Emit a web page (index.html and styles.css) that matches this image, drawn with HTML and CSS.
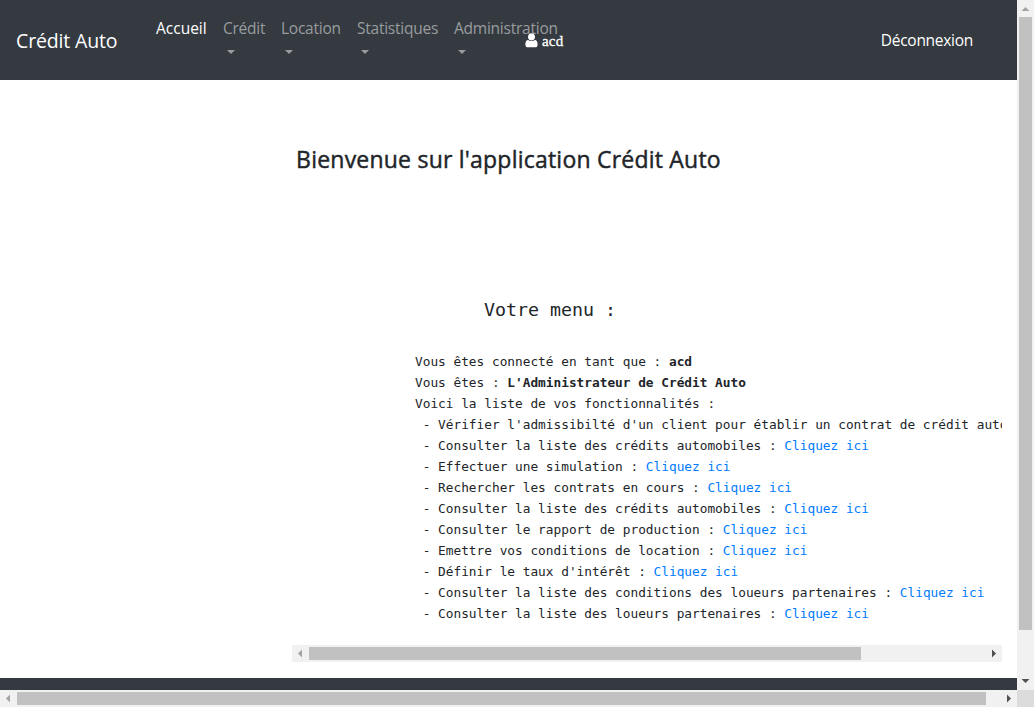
FILE: index.html
```html
<!DOCTYPE html>
<html lang="fr">
<head>
<meta charset="utf-8">
<title>Crédit Auto</title>
<link rel="stylesheet" href="styles.css">
</head>
<body>
<div class="window">
  <div class="page">
    <header class="navbar">
      <a class="brand">Crédit Auto</a>
      <nav class="links">
        <a class="link active home">Accueil</a>
        <a class="link credit">Crédit<i class="caret"></i></a>
        <a class="link location">Location<i class="caret"></i></a>
        <a class="link stats">Statistiques<i class="caret"></i></a>
        <a class="link admin">Administration<i class="caret"></i></a>
      </nav>
      <span class="user">
        <svg class="user-icon" width="13" height="15" viewBox="0 0 13 15"><path fill="#fff" d="M6.5 0.3C8.6 0.3 10 1.8 10 3.9S8.6 7.5 6.5 7.5 3 6 3 3.900 4.400 .3 6.500 .3ZM3.300 6.900C4.200 7.700 5.300 8.100 6.500 8.100S8.800 7.700 9.700 6.900C12 6.900 12.600 9.200 12.600 11.700 12.600 13.300 11.700 14.300 10.200 14.300H2.800C1.300 14.300 .4 13.300 .4 11.700 .4 9.200 1 6.900 3.300 6.900Z"/></svg>
        <span>acd</span>
      </span>
      <a class="logout">Déconnexion</a>
    </header>
    <main class="content">
      <h1 class="title">Bienvenue sur l'application Crédit Auto</h1>
      <section class="panel">
        <h2 class="menu-title">Votre menu :</h2>
<pre class="menu">Vous êtes connecté en tant que : <b>acd</b>
Vous êtes : <b>L'Administrateur de Crédit Auto</b>
Voici la liste de vos fonctionnalités :
 - Vérifier l'admissibilté d'un client pour établir un contrat de crédit automobile : <a>Cliquez ici</a>
 - Consulter la liste des crédits automobiles : <a>Cliquez ici</a>
 - Effectuer une simulation : <a>Cliquez ici</a>
 - Rechercher les contrats en cours : <a>Cliquez ici</a>
 - Consulter la liste des crédits automobiles : <a>Cliquez ici</a>
 - Consulter le rapport de production : <a>Cliquez ici</a>
 - Emettre vos conditions de location : <a>Cliquez ici</a>
 - Définir le taux d'intérêt : <a>Cliquez ici</a>
 - Consulter la liste des conditions des loueurs partenaires : <a>Cliquez ici</a>
 - Consulter la liste des loueurs partenaires : <a>Cliquez ici</a></pre>
        <div class="hbar">
          <svg class="arrow" width="17" height="17"><path fill="#a3a3a3" d="M6 8.500 10 4.500V12.500Z"/></svg>
          <div class="track"><div class="thumb panel-thumb"></div></div>
          <svg class="arrow" width="17" height="17"><path fill="#505050" d="M11 8.500 7 4.500V12.500Z"/></svg>
        </div>
      </section>
    </main>
    <footer class="footer"></footer>
  </div>
  <div class="vbar">
    <svg class="arrow" width="17" height="17"><path fill="#a3a3a3" d="M8.500 7 12.500 11H4.500Z"/></svg>
    <div class="vtrack"><div class="vthumb"></div></div>
    <svg class="arrow" width="17" height="17"><path fill="#505050" d="M8.500 10 12.500 6H4.500Z"/></svg>
  </div>
  <div class="hbar">
    <svg class="arrow" width="17" height="17"><path fill="#a3a3a3" d="M6 8.500 10 4.500V12.500Z"/></svg>
    <div class="track"><div class="thumb page-thumb"></div></div>
    <svg class="arrow" width="17" height="17"><path fill="#505050" d="M11 8.500 7 4.500V12.500Z"/></svg>
  </div>
  <div class="corner"></div>
</div>
</body>
</html>
```

FILE: styles.css
```css
* { box-sizing: border-box; }
body { margin: 0; overflow: hidden; background: #fff; color: #212529; font-family: "Open Sans", "Noto Sans", sans-serif; }
.window { display: grid; grid-template-columns: 1017px 17px; grid-template-rows: 690px 17px; width: 1034px; height: 707px; }
.page { display: flex; flex-direction: column; overflow: hidden; }

.navbar { position: relative; flex: none; display: flex; height: 80px; padding-left: 16px; background: #343a40; color: #fff; white-space: nowrap; }
.brand { width: 132px; padding-top: 26px; font-size: 19.500px; line-height: 30px; letter-spacing: -0.150px; }
.links { display: flex; padding-top: 16px; }
.link { display: flex; flex-direction: column; padding: 0 8px; font-size: 15.500px; line-height: 24px; letter-spacing: -0.240px; color: #999c9f; }
.active { color: #fff; }
.home { width: 67px; letter-spacing: 0; }
.credit { width: 58px; }
.location { width: 76px; }
.stats { width: 97px; }
.admin { width: 120px; }
.caret { width: 0; height: 0; margin: 10px 0 0 4px; border: 4.500px solid transparent; border-top: 4.500px solid #999c9f; border-bottom: 0; }
.user { position: absolute; left: 525px; top: 33px; display: flex; gap: 4px; font: 15px/16px "Liberation Serif", serif; letter-spacing: 0.200px; -webkit-text-stroke: 0.300px #fff; }
.logout { margin-left: auto; padding: 28px 44px 0 0; font-size: 15.500px; line-height: 24px; letter-spacing: -0.280px; }

.content { flex: 1; display: flex; flex-direction: column; }
.title { margin: 61px 0 0; height: 37px; font-size: 23px; line-height: 36px; font-weight: 500; letter-spacing: 0.220px; -webkit-text-stroke: 0.450px #212529; text-align: center; white-space: nowrap; }
.panel { margin: 119px 15px 0 292px; overflow: hidden; }
.menu-title, .menu { font-family: "DejaVu Sans Mono", monospace; }
.menu-title { margin: 0 0 0 192px; font-size: 18.270px; line-height: 26px; font-weight: 400; }
.menu { margin: 28px 0 0; padding-left: 123px; height: 294px; font-size: 12.790px; line-height: 21px; overflow: hidden; }
.menu a { color: #007bff; }
.footer { height: 12px; flex: none; background: #343a40; }

.hbar { display: flex; height: 17px; background: #f1f1f1; }
.arrow { flex: none; display: block; }
.track { flex: 1; padding: 2px 0; }
.thumb { height: 13px; background: #c1c1c1; }
.panel-thumb { width: 552px; }
.page-thumb { width: 969px; }
.vbar { display: flex; flex-direction: column; background: #f1f1f1; }
.vtrack { flex: 1; padding: 0 2px; }
.vthumb { height: 613px; background: #c1c1c1; }
.corner { background: #dcdcdc; }
```
